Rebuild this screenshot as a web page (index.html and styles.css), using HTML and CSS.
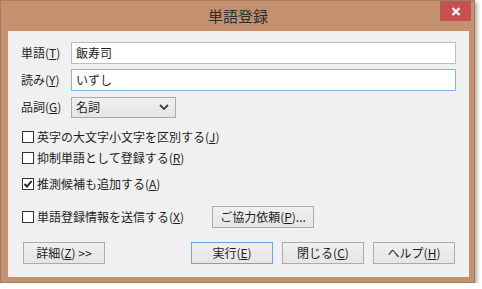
FILE: index.html
```html
<!DOCTYPE html>
<html lang="ja">
<head>
<meta charset="utf-8">
<title>単語登録</title>
<link rel="stylesheet" href="styles.css">
</head>
<body>
<div class="window">
  <div class="titlebar">
    <span></span>
    <span class="title">単語登録</span>
    <span class="close-wrap">
      <span class="close">
        <svg width="10" height="9" viewBox="0 0 10 9"><path d="M1.5 1 L8.5 8 M8.5 1 L1.5 8" stroke="#fff" stroke-width="2.2" fill="none"/></svg>
      </span>
    </span>
  </div>
  <div class="client">
    <div class="field-row">
      <span class="label">単語(<u>T</u>)</span>
      <div class="textbox">飯寿司</div>
    </div>
    <div class="field-row">
      <span class="label">読み(<u>Y</u>)</span>
      <div class="textbox focused">いずし</div>
    </div>
    <div class="field-row">
      <span class="label">品詞(<u>G</u>)</span>
      <div class="combo">
        <span>名詞</span>
        <svg width="10" height="6" viewBox="0 0 10 6"><path d="M1 1 L5 5 L9 1" stroke="#3c3c3c" stroke-width="1.8" fill="none"/></svg>
      </div>
    </div>

    <div class="checks">
      <div class="check-row"><span class="box"></span><span>英字の大文字小文字を区別する(<u>J</u>)</span></div>
      <div class="check-row"><span class="box"></span><span>抑制単語として登録する(<u>R</u>)</span></div>
      <div class="check-row gap"><span class="box"><svg width="10" height="10" viewBox="0 0 10 10"><path d="M1.5 5 L4 7.6 L8.6 2" stroke="#222" stroke-width="1.9" fill="none"/></svg></span><span>推測候補も追加する(<u>A</u>)</span></div>
      <div class="send-row">
        <div class="check-row wide"><span class="box"></span><span>単語登録情報を送信する(<u>X</u>)</span></div>
        <div class="btn coop">ご協力依頼(<u>P</u>)...</div>
      </div>
    </div>

    <div class="button-row">
      <div class="btn detail">詳細(<u>Z</u>) &gt;&gt;</div>
      <div class="btn-group">
        <div class="btn default">実行(<u>E</u>)</div>
        <div class="btn">閉じる(<u>C</u>)</div>
        <div class="btn">ヘルプ(<u>H</u>)</div>
      </div>
    </div>
  </div>
</div>
</body>
</html>
```

FILE: styles.css
```css
html, body {
  margin: 0;
  padding: 0;
  background: #ffffff;
}

body {
  font-family: "Noto Sans CJK JP", "Noto Sans", sans-serif;
  color: #1e1e1e;
}

.window {
  width: 475px;
  height: 283px;
  box-sizing: border-box;
  background: #c3916f;
  border: 1px solid #a97b5b;
  box-shadow: 2px 2px 4px rgba(0, 0, 0, 0.35);
  display: flex;
  flex-direction: column;
}

.titlebar {
  height: 30px;
  flex: 0 0 30px;
  display: grid;
  grid-template-columns: 1fr auto 1fr;
  align-items: start;
  padding: 0 3px 0 4px;
}

.title {
  font-size: 15px;
  line-height: 30px;
  color: #2e2e2e;
}

.close-wrap {
  justify-self: end;
}

.close {
  width: 31px;
  height: 20px;
  background: #c75050;
  display: flex;
  align-items: center;
  justify-content: center;
}

.close svg {
  display: block;
}

.client {
  flex: 1;
  margin: 0 5px 5px 7px;
  background: #f0f0f0;
  padding: 11px 13px 0 13px;
  display: flex;
  flex-direction: column;
  font-size: 12px;
  line-height: 16px;
}

u {
  text-decoration: underline;
  text-underline-offset: 1px;
}

.field-row {
  display: flex;
  align-items: center;
  height: 22px;
  margin-bottom: 5px;
}

.label {
  width: 50px;
  flex: 0 0 50px;
}

.textbox {
  flex: 1;
  height: 22px;
  box-sizing: border-box;
  border: 1px solid #bdbdbd;
  background: #ffffff;
  padding-left: 4px;
  line-height: 20px;
}

.textbox.focused {
  border-color: #7eb4ea;
}

.combo {
  width: 105px;
  height: 21px;
  box-sizing: border-box;
  border: 1px solid #acacac;
  background: linear-gradient(#f0f0f0, #e5e5e5);
  display: flex;
  align-items: center;
  justify-content: space-between;
  padding: 0 6px 0 4px;
}

.combo svg {
  display: block;
}

.checks {
  margin-top: 3px;
  display: flex;
  flex-direction: column;
}

.check-row {
  display: flex;
  align-items: center;
  height: 21px;
  padding-left: 1px;
  box-sizing: border-box;
}

.check-row.gap {
  margin-top: 5px;
}

.check-row.wide {
  width: 191px;
  flex: 0 0 191px;
}

.box {
  width: 12px;
  height: 12px;
  box-sizing: border-box;
  border: 1px solid #333333;
  background: #ffffff;
  margin-right: 3px;
  display: flex;
  align-items: center;
  justify-content: center;
}

.box svg {
  display: block;
}

.send-row {
  display: flex;
  align-items: center;
  margin-top: 12px;
}

.btn {
  width: 82px;
  height: 22px;
  box-sizing: border-box;
  border: 1px solid #acacac;
  background: linear-gradient(#f0f0f0, #e5e5e5);
  display: flex;
  align-items: center;
  justify-content: center;
  white-space: nowrap;
}

.btn.coop {
  width: 102px;
}

.btn.default {
  border-color: #6aa6e6;
}

.button-row {
  display: flex;
  justify-content: space-between;
  align-items: center;
  margin-top: 14px;
  padding: 0 1px 0 2px;
}

.btn-group {
  display: flex;
  gap: 9px;
}
```
